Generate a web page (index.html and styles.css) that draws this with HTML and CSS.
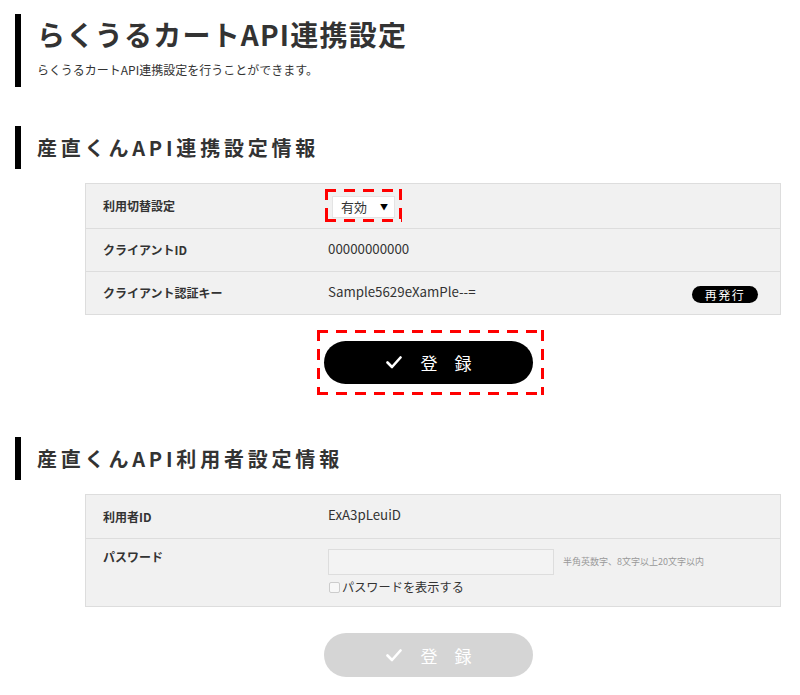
FILE: index.html
```html
<!DOCTYPE html>
<html lang="ja">
<head>
  <meta charset="UTF-8">
  <title>らくうるカートAPI連携設定</title>
  <link rel="stylesheet" href="styles.css">
</head>
<body>
  <div class="page">
    <!-- Page title -->
    <div class="page-head">
      <h1>らくうるカートAPI連携設定</h1>
      <p class="lead">らくうるカートAPI連携設定を行うことができます。</p>
    </div>

    <!-- API settings -->
    <h2 class="sec-title">産直くんAPI連携設定情報</h2>
    <div class="box">
      <div class="row tall">
        <div class="label">利用切替設定</div>
        <div class="value">
          <span class="mark">
            <span class="select">有効<span class="arrow">&#9660;</span></span>
          </span>
        </div>
      </div>
      <div class="row">
        <div class="label">クライアントID</div>
        <div class="value">00000000000</div>
      </div>
      <div class="row">
        <div class="label">クライアント認証キー</div>
        <div class="value split">
          <span>Sample5629eXamPle--=</span>
          <button class="btn-small" type="button">再発行</button>
        </div>
      </div>
    </div>
    <div class="actions first">
      <div class="mark big">
        <button class="btn-main" type="button">
          <svg width="16" height="13" viewBox="0 0 16 13"><polyline points="1.5,6.5 6,11 14.5,1.5" fill="none" stroke="#fff" stroke-width="2.6" stroke-linecap="round" stroke-linejoin="round"/></svg>
          <span>登　録</span>
        </button>
      </div>
    </div>

    <!-- User settings -->
    <h2 class="sec-title second">産直くんAPI利用者設定情報</h2>
    <div class="box">
      <div class="row">
        <div class="label">利用者ID</div>
        <div class="value">ExA3pLeuiD</div>
      </div>
      <div class="row top">
        <div class="label">パスワード</div>
        <div class="value">
          <div class="pw-line">
            <input class="pw" type="password">
            <span class="hint">半角英数字、8文字以上20文字以内</span>
          </div>
          <label class="check"><input type="checkbox">パスワードを表示する</label>
        </div>
      </div>
    </div>
    <div class="actions">
      <button class="btn-main off" type="button" disabled>
        <svg width="16" height="13" viewBox="0 0 16 13"><polyline points="1.5,6.5 6,11 14.5,1.5" fill="none" stroke="#fff" stroke-width="2.6" stroke-linecap="round" stroke-linejoin="round"/></svg>
        <span>登　録</span>
      </button>
    </div>
  </div>
</body>
</html>
```

FILE: styles.css
```css
* {
  box-sizing: border-box;
}

html, body {
  margin: 0;
  padding: 0;
  background: #fff;
  font-family: "Noto Sans CJK JP", "Noto Sans", sans-serif;
  color: #333;
}

.page {
  padding: 14px 19px 20px 15px;
}

/* Title block */
.page-head {
  border-left: 6px solid #000;
  padding: 0 0 7px 16px;
}

.page-head h1 {
  margin: 0;
  font-size: 28px;
  line-height: 40px;
  font-weight: bold;
  letter-spacing: 1.2px;
}

.page-head .lead {
  margin: 6px 0 0;
  font-size: 12px;
  line-height: 20px;
}

.sec-title {
  margin: 39px 0 0;
  border-left: 6px solid #000;
  padding-left: 16px;
  font-size: 20px;
  line-height: 43px;
  letter-spacing: 3.8px;
  font-weight: bold;
}

.sec-title.second {
  margin-top: 42px;
}

/* Setting table */
.box {
  margin: 14px 0 0 70px;
  border: 1px solid #ddd;
  background: #f1f1f1;
}

.row {
  display: flex;
  align-items: center;
  height: 43px;
  padding: 0 22px 0 17px;
}

.row.tall {
  height: 44px;
}

.row + .row {
  border-top: 1px solid #ddd;
}

.row.top {
  align-items: flex-start;
  height: 68px;
  padding-top: 8px;
}

.label {
  width: 225px;
  flex-shrink: 0;
  font-size: 12px;
  font-weight: bold;
  line-height: 20px;
}

.value {
  flex: 1;
  font-size: 13.3px;
  line-height: 20px;
  margin-top: -3px;
}

.row.top .value {
  margin-top: 2px;
}

.value.split {
  display: flex;
  justify-content: space-between;
  align-items: center;
}

/* red dashed marks */
.mark {
  display: inline-block;
  padding: 7px 7px 4px;
  margin-left: -3px;
  margin-top: 1px;
  background:
    linear-gradient(90deg, #f00 11px, transparent 11px) left top / 19px 3px repeat-x,
    linear-gradient(90deg, #f00 11px, transparent 11px) left bottom / 19px 3px repeat-x,
    linear-gradient(180deg, #f00 11px, transparent 11px) left top / 3px 19px repeat-y,
    linear-gradient(180deg, #f00 11px, transparent 11px) right top / 3px 19px repeat-y;
}

.select {
  display: inline-flex;
  align-items: center;
  justify-content: space-between;
  width: 63px;
  height: 22px;
  padding: 0 6px 0 8px;
  background: #fff;
  border: 1px solid #e4e4e4;
  font-size: 13px;
  color: #333;
}

.arrow {
  font-size: 8px;
  color: #000;
}

.btn-small {
  width: 66px;
  height: 17px;
  margin-top: 6px;
  border: none;
  border-radius: 9px;
  background: #000;
  color: #fff;
  font-family: inherit;
  font-size: 12px;
  line-height: 17px;
  letter-spacing: 1.5px;
  padding: 0;
}

.actions {
  display: flex;
  justify-content: center;
  margin: 26px 0 0 70px;
  padding-right: 9px;
}

.actions.first {
  margin-top: 15px;
  padding-right: 5px;
}

.mark.big {
  margin: 0;
  padding: 11px 11px 11px 7px;
}

.btn-main {
  display: flex;
  align-items: center;
  justify-content: center;
  gap: 19px;
  width: 209px;
  height: 43px;
  border: none;
  border-radius: 22px;
  background: #000;
  color: #fff;
  font-family: inherit;
  font-size: 17px;
  padding: 0;
}

.btn-main.off {
  height: 44px;
  background: #d5d5d5;
}

/* password */
.pw-line {
  display: flex;
  align-items: center;
}

.pw {
  width: 226px;
  height: 26px;
  margin: 0;
  border: 1px solid #ddd;
  background: #f3f3f3;
}

.hint {
  margin-left: 9px;
  font-size: 9px;
  color: #999;
}

.check {
  display: flex;
  align-items: center;
  margin-top: 2px;
  font-size: 12.2px;
  line-height: 20px;
}

.check input {
  appearance: none;
  width: 11px;
  height: 11px;
  margin: 0 2px 0 1px;
  border: 1px solid #ccc;
  border-radius: 2px;
  background: #f7f7f7;
}
```
